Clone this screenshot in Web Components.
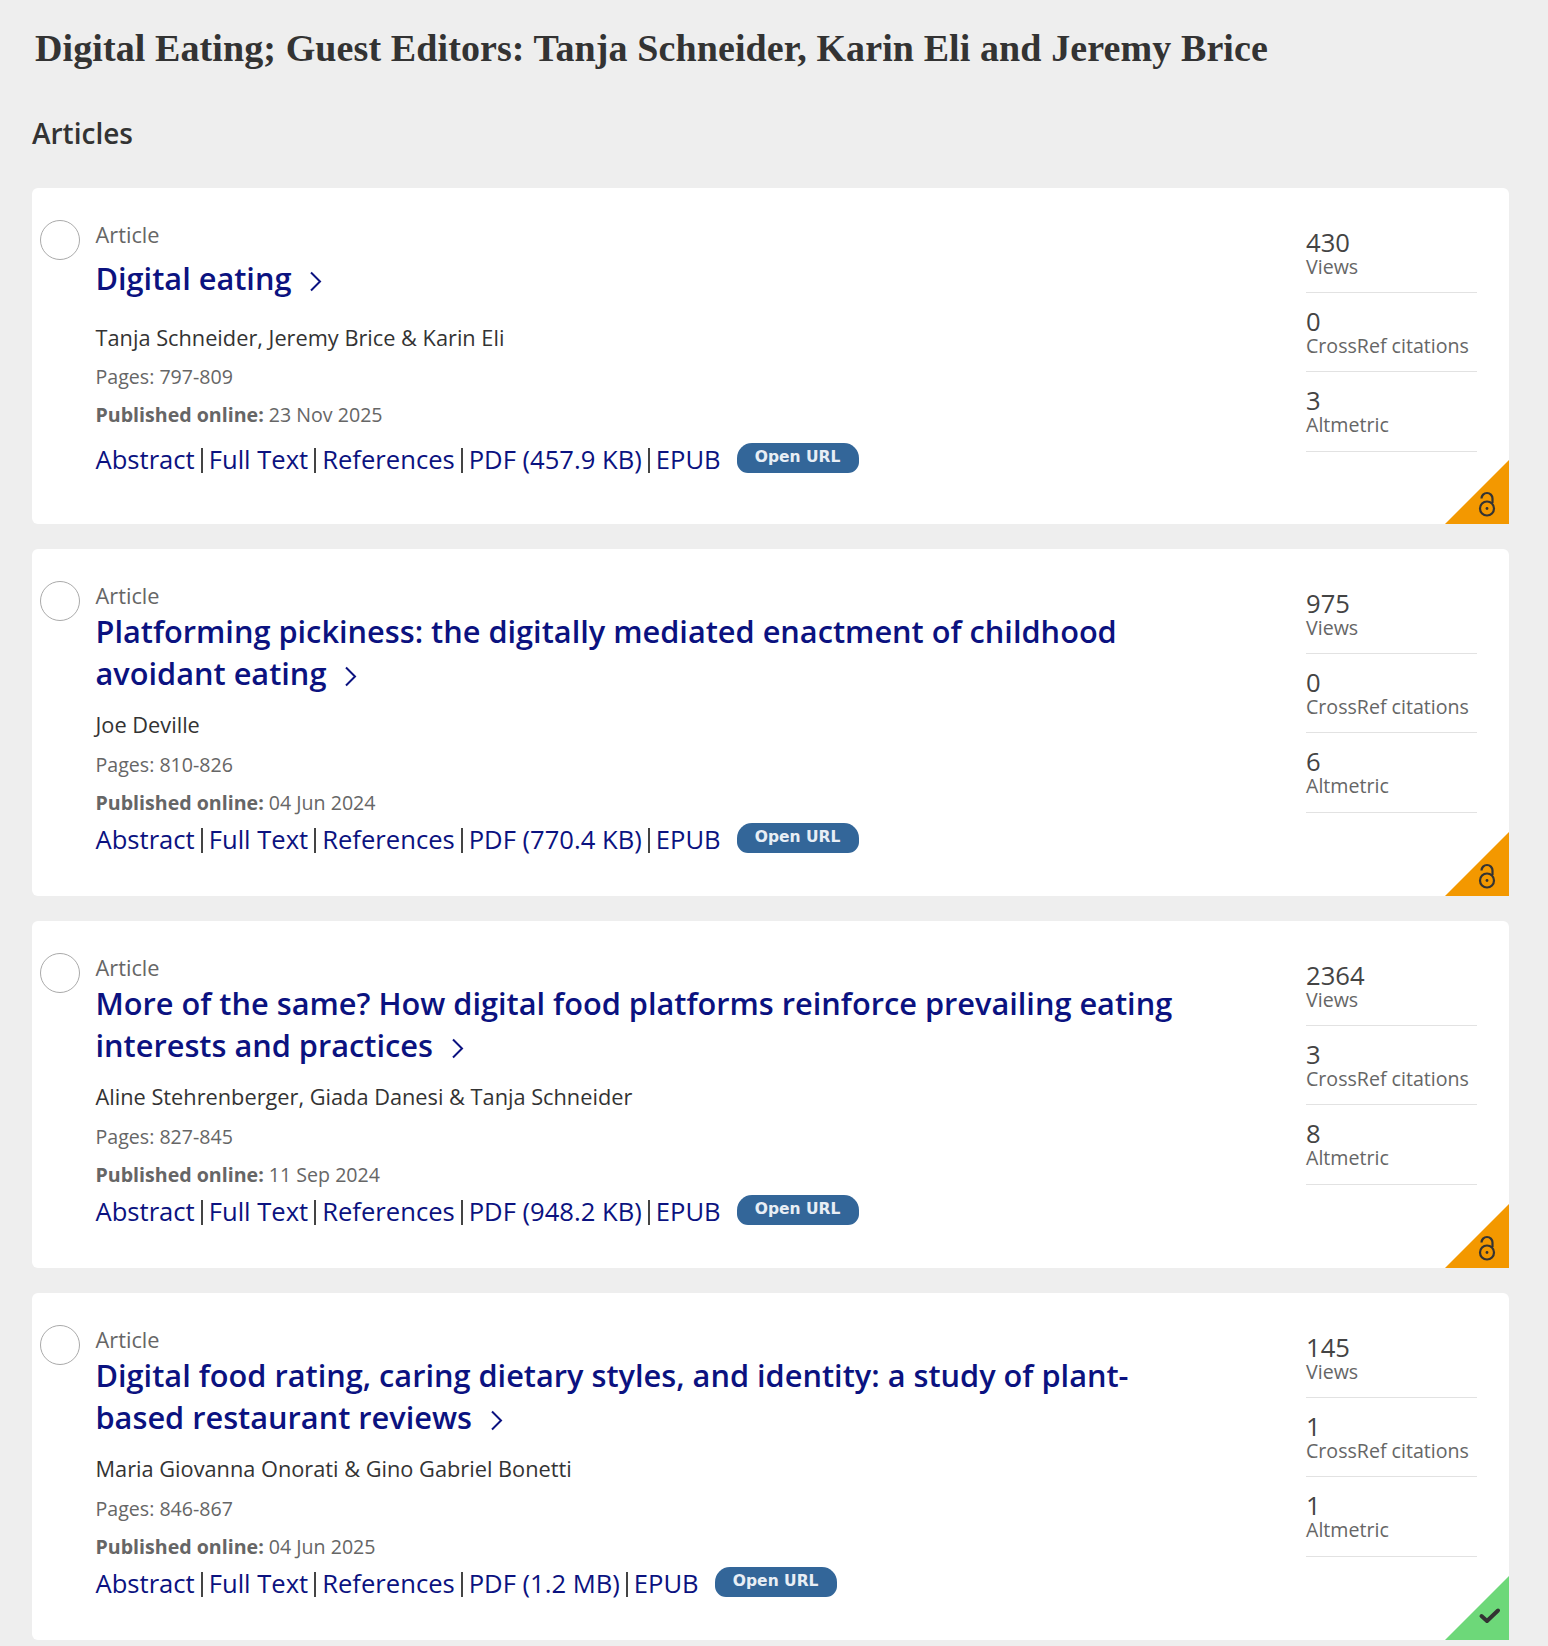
<!DOCTYPE html>
<html lang="en">
<head>
<meta charset="utf-8">
<title>Digital Eating</title>
<style>
  html, body { margin: 0; background: #eeeeee; }
  body { font-family: "Open Sans", "Liberation Sans", sans-serif; }
</style>
</head>
<body>
<issue-page>
  <h1 slot="title">Digital Eating; Guest Editors: Tanja Schneider, Karin Eli and Jeremy Brice</h1>
  <span slot="section">Articles</span>
  <article-card single title="Digital eating" authors="Tanja Schneider, Jeremy Brice &amp; Karin Eli" pages="797-809" date="23 Nov 2025" pdf="PDF (457.9 KB)" views="430" cites="0" alt="3" access="open"></article-card>
  <article-card title="Platforming pickiness: the digitally mediated enactment of childhood avoidant eating" authors="Joe Deville" pages="810-826" date="04 Jun 2024" pdf="PDF (770.4 KB)" views="975" cites="0" alt="6" access="open"></article-card>
  <article-card title="More of the same? How digital food platforms reinforce prevailing eating interests and practices" authors="Aline Stehrenberger, Giada Danesi &amp; Tanja Schneider" pages="827-845" date="11 Sep 2024" pdf="PDF (948.2 KB)" views="2364" cites="3" alt="8" access="open"></article-card>
  <article-card title="Digital food rating, caring dietary styles, and identity: a study of plant-based restaurant reviews" authors="Maria Giovanna Onorati &amp; Gino Gabriel Bonetti" pages="846-867" date="04 Jun 2025" pdf="PDF (1.2 MB)" views="145" cites="1" alt="1" access="free"></article-card>
</issue-page>

<script>
// Page frame: heading, section label, list of cards
class IssuePage extends HTMLElement {
  constructor() {
    super();
    this.attachShadow({ mode: 'open' });
    this.shadowRoot.innerHTML = `
      <style>
        :host { display: block; padding: 26px 39px 6px 32px; color: #333; }
        ::slotted(h1) {
          margin: 0 0 0 3px;
          font: bold 38px/44px "Liberation Serif", serif;
          letter-spacing: 0.1px;
          color: #333;
        }
        .section { margin: 44px 0 36px; font-size: 28px; line-height: 38px; font-weight: 600; color: #333; }
        .list { display: flex; flex-direction: column; gap: 25px; }
      </style>
      <slot name="title"></slot>
      <div class="section"><slot name="section"></slot></div>
      <div class="list"><slot></slot></div>
    `;
  }
}

// One article row with its stats column and access corner
class ArticleCard extends HTMLElement {
  constructor() {
    super();
    this.attachShadow({ mode: 'open' });
  }

  connectedCallback() {
    this.render();
  }

  render() {
    const a = (name) => this.getAttribute(name) || '';
    const corner = a('access') === 'free'
      ? `<div class="corner free">
           <svg width="24" height="18" viewBox="0 0 24 18"><path d="M3.5 9L9 14L20 3.5" fill="none" stroke="#333" stroke-width="4" stroke-linecap="round" stroke-linejoin="round"/></svg>
         </div>`
      : `<div class="corner open">
           <svg width="18" height="26" viewBox="0 0 18 26"><path d="M3.5 7.5a5.5 5.5 0 0 1 11 0V12" fill="none" stroke="#333" stroke-width="2.2"/><circle cx="9" cy="17.5" r="7" fill="none" stroke="#333" stroke-width="2.2"/><circle cx="9" cy="17.5" r="1.4" fill="#333"/></svg>
         </div>`;

    this.shadowRoot.innerHTML = `
      <style>
        :host {
          display: flex;
          position: relative;
          overflow: hidden;
          box-sizing: border-box;
          background: #fff;
          border-radius: 6px 6px 0 6px;
          padding: 0 0 0 8px;
          height: 347px;
          font-family: "Open Sans", "Liberation Sans", sans-serif;
        }
        :host([single]) { height: 336px; }
        .check {
          flex: none;
          box-sizing: border-box;
          width: 40px; height: 40px;
          margin: 32px 15.5px 0 0;
          background: #fff;
          border: 1px solid #aaa;
          border-radius: 50%;
        }
        .main { flex: 1; min-width: 0; padding: 32px 109px 0 0; }
        .type { font-size: 21.76px; line-height: 29px; color: #666; }
        .title { margin: 0; font-size: 30.72px; line-height: 42px; font-weight: 600; color: #0b1280; }
        :host([single]) .title { margin-top: 8px; }
        .chev { display: inline-block; margin-left: 18px; vertical-align: -2px; }
        .authors { margin-top: 16px; font-size: 21.76px; line-height: 30px; color: #333; }
        :host([single]) .authors { margin-top: 24px; }
        .pages { margin-top: 10px; font-size: 19.6px; line-height: 29px; color: #666; }
        :host([single]) .pages { margin-top: 9px; }
        .date { margin-top: 9px; font-size: 19.6px; line-height: 29px; color: #666; }
        .date b { font-weight: 700; }
        .links { display: flex; align-items: center; margin-top: 4px; font-size: 25.6px; line-height: 38px; color: #0b1280; }
        :host([single]) .links { margin-top: 12px; }
        .links i { width: 2px; height: 25px; margin: 0 6px; background: #444; }
        .badge {
          margin: -4px 0 0 16px;
          width: 122px; height: 30px;
          border-radius: 15px 15px 11px 11px;
          background: #336699;
          color: #e8eef5;
          font: bold 15.5px/28px "DejaVu Sans", sans-serif;
          text-align: center;
        }
        .stats { flex: none; width: 171px; margin-right: 32px; padding-top: 26px; }
        .stat { border-bottom: 1px solid #e2e2e2; padding: 15px 0 10px; height: 53.2px; }
        .num { font-size: 25.6px; line-height: 27px; color: #444; }
        .label { font-size: 19.6px; line-height: 22px; color: #666; }
        .corner {
          position: absolute; right: 0; bottom: 0;
          width: 64px; height: 64px;
          clip-path: polygon(100% 0, 100% 100%, 0 100%);
        }
        .corner.open { background: #f39800; }
        .corner.free { background: #6dd879; }
        .corner svg { position: absolute; }
        .corner.open svg { right: 13px; bottom: 7px; }
        .corner.free svg { right: 7px; bottom: 15px; }
      </style>
      <div class="check"></div>
      <div class="main">
        <div class="type">Article</div>
        <h2 class="title">${a('title')}<svg class="chev" width="13" height="21" viewBox="0 0 13 21"><path d="M2 1.5l9 9-9 9" fill="none" stroke="#0b1280" stroke-width="2"/></svg></h2>
        <div class="authors">${a('authors')}</div>
        <div class="pages">Pages: ${a('pages')}</div>
        <div class="date"><b>Published online:</b> ${a('date')}</div>
        <div class="links">
          <span>Abstract</span><i></i><span>Full Text</span><i></i><span>References</span><i></i><span>${a('pdf')}</span><i></i><span>EPUB</span>
          <span class="badge">Open URL</span>
        </div>
      </div>
      <div class="stats">
        <div class="stat"><div class="num">${a('views')}</div><div class="label">Views</div></div>
        <div class="stat"><div class="num">${a('cites')}</div><div class="label">CrossRef citations</div></div>
        <div class="stat"><div class="num">${a('alt')}</div><div class="label">Altmetric</div></div>
      </div>
      ${corner}
    `;
  }
}

customElements.define('issue-page', IssuePage);
customElements.define('article-card', ArticleCard);
</script>
</body>
</html>
